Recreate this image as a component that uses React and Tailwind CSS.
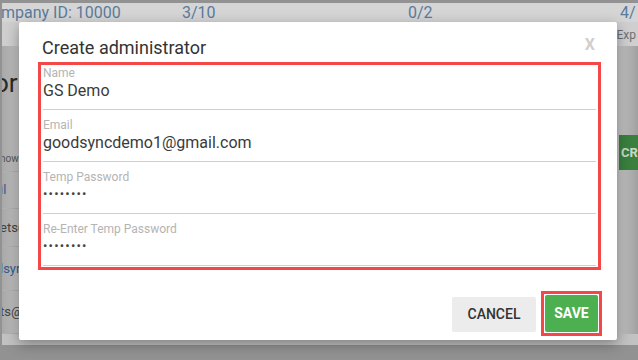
import { useState } from 'react'

const FIELDS = [
  { label: 'Name', value: 'GS Demo' },
  { label: 'Email', value: 'goodsyncdemo1@gmail.com' },
  { label: 'Temp Password', value: '••••••••', secret: true },
  { label: 'Re-Enter Temp Password', value: '••••••••', secret: true },
]

const ROWS = [
  { t: 'how', h: 'h-[26px]', c: 'text-[10px] text-[#555]' },
  { t: 'il', h: 'h-[37px]', c: 'text-[13px] text-[#37598a]' },
  { t: 'ets(', h: 'h-[38px]', c: 'text-[13px] text-[#444]' },
  { t: 'lsyr', h: 'h-[44px]', c: 'text-[13px] text-[#37598a]' },
  { t: 'ts@', h: 'h-[43px]', c: 'text-[13px] text-[#444]' },
]

function Field({ f }) {
  return (
    <div className="h-[52px] border-b border-[#cfcfcf] pt-[8px]">
      <div className="text-[12px] leading-[14px] text-[#b4b4b4]">{f.label}</div>
      {f.secret ? (
        <div className="mt-[1px] text-[13px] leading-[18px] tracking-[1.2px] text-[#444]">{f.value}</div>
      ) : (
        <div className="mt-[1px] text-[16px] leading-[20px] text-[#3a3a3a]">{f.value}</div>
      )}
    </div>
  )
}

function Page() {
  return (
    <div className="ml-[2px] mt-[3px] h-[342px] w-[636px] bg-[#c2c2c2]">
      {/* top stats bar */}
      <div className="flex h-[19px] items-center bg-[#d5d5d5] text-[16px] text-[#5a7b9c]">
        <span className="w-[181px] shrink-0 -ml-[1px] whitespace-nowrap">mpany ID: 10000</span>
        <span className="w-[226px] shrink-0">3/10</span>
        <span className="w-[212px] shrink-0">0/2</span>
        <span>4/</span>
      </div>
      <div className="flex h-[24px] justify-end bg-[#cfcfcf] pr-[2px] text-[12px] text-[#6f6f6f]">
        <span className="mt-[4px]">Exp</span>
      </div>
      <div className="flex">
        {/* left remnant column */}
        <div className="w-[18px] overflow-hidden bg-gradient-to-r from-[#a8a8a8] to-[#c6c6c6]">
          <div className="mt-[22px] -ml-[8px] text-[26px] leading-[30px] text-[#2a2a2a]">ors</div>
          <div className="mt-[48px]">
            {ROWS.map((r) => (
              <div
                key={r.t}
                className={`-ml-[2px] flex items-center border-b border-[#b0b0b0] ${r.h} ${r.c}`}
              >
                {r.t}
              </div>
            ))}
          </div>
        </div>
        <div className="flex-1" />
        <div className="w-[19px] bg-gradient-to-r from-[#c4c4c4] to-[#a0a0a0]">
          <div className="mt-[89px] h-[35px] bg-[#3a7f3e] pl-[2px] text-[13px] font-bold leading-[35px] text-[#c9d9c9]">
            CR
          </div>
        </div>
      </div>
    </div>
  )
}

export default function App() {
  const [fields] = useState(FIELDS)
  return (
    <div
      className="relative h-[360px] w-[638px] overflow-hidden bg-[#929292]"
      style={{ fontFamily: 'Roboto, "Liberation Sans", sans-serif' }}
    >
      <Page />

      {/* modal */}
      <div className="absolute left-[19px] top-[22px] flex h-[318px] w-[598px] flex-col rounded-[2px] bg-white shadow-[0_4px_14px_rgba(0,0,0,0.35)]">
        <div className="flex h-[37px] items-end justify-between pl-[23px] pr-[22px]">
          <h2 className="text-[18px] leading-[22px] text-[#333]">Create administrator</h2>
          <span className="mb-[2px] text-[16px] font-bold text-[#cfcfcf]">X</span>
        </div>

        <div className="ml-[19px] mt-[3px] h-[208px] w-[563px] overflow-hidden border-[3px] border-[#f44848] px-[2px]">
          <div className="-mt-[7px]">
            {fields.map((f) => (
              <Field key={f.label} f={f} />
            ))}
          </div>
        </div>

        <div className="mt-[21px] flex justify-end gap-[5px] pr-[15px]">
          <button className="mt-[6px] h-[35px] w-[84px] rounded-[2px] bg-[#ececec] text-[14px] font-medium text-[#333]">
            CANCEL
          </button>
          <div className="border-[3px] border-[#f44848] p-[1px]">
            <button className="h-[37px] w-[53px] rounded-[2px] bg-[#4caf50] text-[14px] font-bold text-white">
              SAVE
            </button>
          </div>
        </div>
      </div>
    </div>
  )
}
